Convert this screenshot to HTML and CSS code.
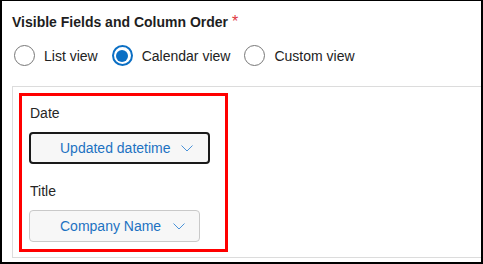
FILE: index.html
```html
<!DOCTYPE html>
<html>
<head>
<meta charset="utf-8">
<link rel="stylesheet" href="styles.css">
</head>
<body>
<div class="frame">
  <div class="heading">Visible Fields and Column Order <span class="req">*</span></div>
  <div class="radios">
    <label class="opt"><span class="radio"></span><span>List view</span></label>
    <label class="opt"><span class="radio checked"></span><span>Calendar view</span></label>
    <label class="opt"><span class="radio"></span><span>Custom view</span></label>
  </div>
  <div class="panel">
    <div class="highlight">
      <div class="label">Date</div>
      <div class="select focused">
        <span>Updated datetime</span>
        <svg class="chev" width="12" height="7" viewBox="0 0 12 7"><path d="M0.5 0.5 L6 6 L11.5 0.5" fill="none" stroke="#4a93d9" stroke-width="1"/></svg>
      </div>
      <div class="label second">Title</div>
      <div class="select">
        <span>Company Name</span>
        <svg class="chev" width="12" height="7" viewBox="0 0 12 7"><path d="M0.5 0.5 L6 6 L11.5 0.5" fill="none" stroke="#4a93d9" stroke-width="1"/></svg>
      </div>
    </div>
  </div>
</div>
</body>
</html>
```
FILE: styles.css
```css
html, body {
  margin: 0;
  padding: 0;
  background: #fff;
}
.frame {
  width: 483px;
  height: 264px;
  box-sizing: border-box;
  border: 2px solid #000;
  border-top-width: 1px;
  padding: 13px 0 0 10px;
  font-family: "Liberation Sans", Arial, sans-serif;
  font-size: 14px;
  line-height: 16px;
  color: #222;
  overflow: hidden;
}
.heading {
  font-weight: bold;
  color: #1e1e1e;
}
.req {
  color: #e0393e;
  font-weight: normal;
  font-size: 16px;
}
.radios {
  display: flex;
  align-items: center;
  gap: 14px;
  margin-top: 15px;
  padding-left: 2px;
  height: 21px;
}
.opt {
  display: flex;
  align-items: center;
  gap: 9px;
  color: #222;
}
.radio {
  width: 21px;
  height: 21px;
  box-sizing: border-box;
  border: 1px solid #777;
  border-radius: 50%;
  background: #fff;
  display: flex;
  align-items: center;
  justify-content: center;
}
.radio.checked {
  border: 2px solid #0b6fc4;
}
.radio.checked::after {
  content: "";
  width: 12px;
  height: 12px;
  border-radius: 50%;
  background: #0b6fc4;
}
.panel {
  margin-top: 20px;
  border: 1px solid #dcdcdc;
  border-right: none;
  height: 172px;
  box-sizing: border-box;
  padding: 6px;
}
.highlight {
  width: 209px;
  height: 159px;
  box-sizing: border-box;
  border: 3px solid #ff0000;
  padding: 9px 7px 0 7px;
  display: flex;
  flex-direction: column;
  align-items: flex-start;
}
.label {
  color: #262626;
  padding-left: 1px;
}
.label.second {
  margin-top: 19px;
}
.select {
  margin-top: 11px;
  height: 32px;
  box-sizing: border-box;
  border: 1px solid #c9c9c9;
  border-radius: 4px;
  background: #f7f7f7;
  display: flex;
  align-items: center;
  gap: 12px;
  padding: 0 14px 0 30px;
  color: #1d72c2;
}
.select.focused {
  border: 2px solid #1a1a1a;
  padding-left: 29px;
  padding-right: 15px;
  gap: 10px;
}
.chev {
  display: block;
}
```
